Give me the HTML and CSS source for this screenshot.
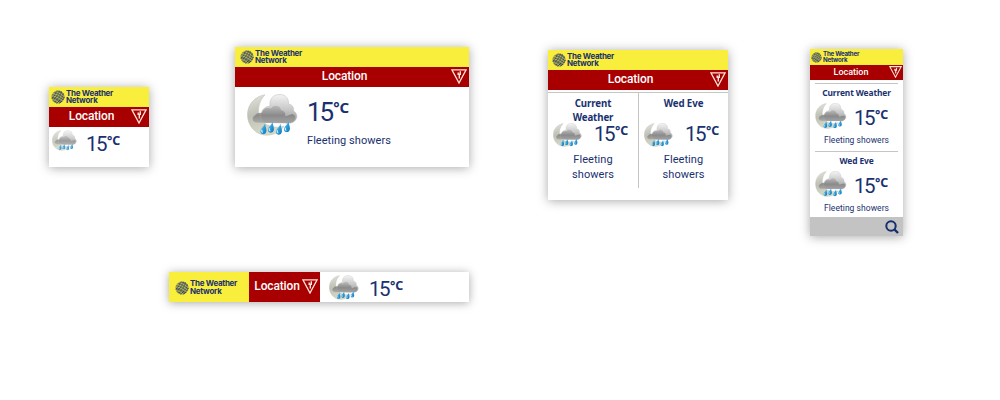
FILE: index.html
```html
<!DOCTYPE html>
<html lang="en">
<head>
<meta charset="utf-8">
<title>Weather widgets</title>
<link rel="stylesheet" href="styles.css">
</head>
<body>
<svg class="sprites" width="0" height="0" aria-hidden="true">
  <defs>
    <linearGradient id="cloudFill" x1="0" y1="0" x2="0" y2="1"><stop offset="0" stop-color="#f4f4f4"/><stop offset=".5" stop-color="#c9c9c9"/><stop offset="1" stop-color="#969696"/></linearGradient>
    <linearGradient id="darkFill" x1="0" y1="0" x2="0" y2="1"><stop offset="0" stop-color="#b5b5b5"/><stop offset=".55" stop-color="#838383"/><stop offset="1" stop-color="#a5a5a5"/></linearGradient>
    <linearGradient id="moonFill" x1="0" y1="0" x2=".3" y2="1"><stop offset="0" stop-color="#e6e6e2"/><stop offset=".5" stop-color="#bec0b4"/><stop offset="1" stop-color="#d8dac8"/></linearGradient>
    <linearGradient id="dropFill" x1="0" y1="0" x2="1" y2="1"><stop offset="0" stop-color="#a8dcf5"/><stop offset=".5" stop-color="#2e9fdc"/><stop offset="1" stop-color="#1273b4"/></linearGradient>
    <symbol id="drop" viewBox="0 0 7 11"><path d="M5 .3C5.300 4 6.500 5 6.300 7.700C6 10 4.500 10.800 3 10.700C1 10.500 .2 8.800 .6 7.200C1.200 5 4 3.500 5 .3Z" fill="url(#dropFill)"/><path d="M2 6.500C1.500 7.700 2 8.600 2.800 9" stroke="#d9f2ff" stroke-width="1.100" fill="none"/></symbol>
    <symbol id="cloud" viewBox="0 0 51 42">
      <path d="M18 .7C7 2.500 .4 11 .5 21C.6 33 10 41.500 20 41.200C28 41 34 37 37 32C28 35 18 32 13.500 25C9.500 17 12 7 18 .7Z" fill="url(#moonFill)" stroke="#bfc0b4" stroke-width=".5"/>
      <path d="M16 27C12 22 14 13 23 12C22 4 27 .4 33 .5C39 .6 42 5 41.500 10C46 11 47 14 46.500 17C50 19 51 23 48.500 26C46 29.500 42 29.500 38 29L18 28.500Z" fill="url(#cloudFill)" stroke="#b9b9b9" stroke-width=".5"/>
      <path d="M9 28.500C5 27.500 4.500 23 8 21.500C9 19.500 12 18.500 15 19C16 14.500 20 13 24 14.500C26 10.500 33 11 34 16C38 17 39 20 38 22C42 22 43 20 46 20C50 22 48 28 43 28.700C32 29.500 20 29 9 28.500Z" fill="url(#darkFill)" opacity=".85"/>
      <use href="#drop" x="12.500" y="29" width="8" height="11.500"/>
      <use href="#drop" x="20" y="27.500" width="8" height="11.500"/>
      <use href="#drop" x="28" y="29.500" width="8" height="11.500"/>
      <use href="#drop" x="36" y="27" width="8" height="11.500"/>
    </symbol>
    <symbol id="globe" viewBox="0 0 14 14">
      <circle cx="7" cy="7" r="6.500" fill="#7d8255"/>
      <path d="M1 8.500Q5 4 6 .7M2 10.500Q7 6 8.500 .8M3.500 12.200Q9 8 10.500 1.500M5.500 13.200Q11 9.500 12.300 3.500M8.500 13.200Q12 11 13.300 7" fill="none" stroke="#263b6b" stroke-width=".9"/>
      <path d="M.8 6Q4 5.500 12 11M2 3.500Q7 4 12.800 9M4.500 1.500Q10 3.500 13 6.500M1.500 9.500Q5 9.500 8 13" fill="none" stroke="#e5dc49" stroke-width=".6"/>
    </symbol>
    <symbol id="alert" viewBox="0 0 16 15">
      <path d="M.9 .8H15.100L8 14Z" fill="none" stroke="#ffe5d8" stroke-width="1.300"/>
      <path d="M9.300 2.200V5.200H7.200V3.500M8.300 5V9.500" fill="none" stroke="#ffe9df" stroke-width="1.400"/>
    </symbol>
  </defs>
</svg>
<main class="board">
  <div class="row">
    <section class="card compact">
      <header class="brand"><svg class="globe"><use href="#globe"/></svg><span class="brand-name">The Weather<br>Network</span></header>
      <div class="place"><span class="place-name">Location</span><svg class="alert"><use href="#alert"/></svg></div>
      <div class="reading"><svg class="cloud"><use href="#cloud"/></svg><div class="temp">15<span class="unit">°C</span></div></div>
    </section>
    <section class="card wide">
      <header class="brand"><svg class="globe"><use href="#globe"/></svg><span class="brand-name">The Weather<br>Network</span></header>
      <div class="place"><span class="place-name">Location</span><svg class="alert"><use href="#alert"/></svg></div>
      <div class="reading"><svg class="cloud"><use href="#cloud"/></svg><div><div class="temp">15<span class="unit">°C</span></div><p class="summary">Fleeting showers</p></div></div>
    </section>
    <section class="card double">
      <header class="brand"><svg class="globe"><use href="#globe"/></svg><span class="brand-name">The Weather<br>Network</span></header>
      <div class="place"><span class="place-name">Location</span><svg class="alert"><use href="#alert"/></svg></div>
      <div class="columns">
        <div class="period"><h2 class="period-name">Current<br>Weather</h2><div class="reading"><svg class="cloud"><use href="#cloud"/></svg><div class="temp">15<span class="unit">°C</span></div></div><p class="summary">Fleeting<br>showers</p></div>
        <div class="period"><h2 class="period-name">Wed Eve</h2><div class="reading"><svg class="cloud"><use href="#cloud"/></svg><div class="temp">15<span class="unit">°C</span></div></div><p class="summary">Fleeting<br>showers</p></div>
      </div>
    </section>
    <section class="card tall">
      <header class="brand"><svg class="globe"><use href="#globe"/></svg><span class="brand-name">The Weather<br>Network</span></header>
      <div class="place"><span class="place-name">Location</span><svg class="alert"><use href="#alert"/></svg></div>
      <div class="stack">
        <div class="period"><h2 class="period-name">Current Weather</h2><div class="reading"><svg class="cloud"><use href="#cloud"/></svg><div class="temp">15<span class="unit">°C</span></div></div><p class="summary">Fleeting showers</p></div>
        <div class="period"><h2 class="period-name">Wed Eve</h2><div class="reading"><svg class="cloud"><use href="#cloud"/></svg><div class="temp">15<span class="unit">°C</span></div></div><p class="summary">Fleeting showers</p></div>
      </div>
      <footer class="search"><svg width="14" height="14" viewBox="0 0 14 14"><circle cx="6" cy="6" r="4.700" fill="none" stroke="#142f70" stroke-width="2"/><path d="M9.500 9.500L13 13" stroke="#142f70" stroke-width="2.400"/></svg></footer>
    </section>
  </div>
  <section class="card banner">
    <header class="brand"><svg class="globe"><use href="#globe"/></svg><span class="brand-name">The Weather<br>Network</span></header>
    <div class="place"><span class="place-name">Location</span><svg class="alert"><use href="#alert"/></svg></div>
    <div class="reading"><svg class="cloud"><use href="#cloud"/></svg><div class="temp">15<span class="unit">°C</span></div></div>
  </section>
</main>
</body>
</html>
```
FILE: styles.css
```css
* { box-sizing: border-box; }
body { margin: 0; background: #fff; color: #19316f; font-family: Roboto, "Noto Sans", sans-serif; }
.sprites { position: absolute; }
h2, p { margin: 0; }
svg { flex: none; display: block; }
.board { width: 1000px; height: 400px; overflow: hidden; }
.row { display: flex; align-items: flex-start; height: 272px; }
.card { flex: none; background: #fff; box-shadow: 0 1px 10px rgba(0, 0, 0, .34); }

.brand { flex: none; height: 20px; background: #faee3c; display: flex; align-items: center; padding-left: 2px; }
.globe { width: 14px; height: 14px; margin-right: 1px; }
.brand-name { font-family: Inter, "Noto Sans", sans-serif; font-size: 8px; line-height: 7.500px; font-weight: 700; letter-spacing: -.3px; white-space: nowrap; }
.place { flex: none; height: 20px; background: #a80000; color: #fff; display: flex; align-items: center; padding-right: 2px; }
.place-name { flex: 1; text-align: center; font-size: 12px; line-height: 18px; font-weight: 500; padding-bottom: 2px; letter-spacing: -.15px; }
.alert { width: 16px; height: 15px; margin-bottom: 1px; }
.reading { display: flex; align-items: flex-start; }
.temp { display: flex; align-items: flex-start; font-size: 20.500px; line-height: 20px; letter-spacing: -1.500px; font-weight: 400; }
.unit { font-family: "Noto Sans", sans-serif; font-size: 12.500px; line-height: 14px; font-weight: 700; letter-spacing: 0; margin-left: 1px; }
.summary { font-size: 11px; line-height: 15px; letter-spacing: .05px; }
.period-name { font-family: "Noto Sans", sans-serif; font-size: 9.700px; line-height: 14px; font-weight: 700; text-align: center; letter-spacing: -.1px; }

.compact { width: 100px; height: 80px; margin: 87px 0 0 49px; }
.compact .place { padding-left: 3px; }
.compact .cloud { width: 25px; height: 21px; margin: 3px 9px 0 3px; opacity: .85; }
.compact .temp { margin-top: 7px; }

.wide { width: 234px; height: 120px; margin: 47px 0 0 86px; }
.wide .brand { padding-left: 5px; }
.wide .place { padding-left: 3px; }
.wide .cloud { width: 51px; height: 42px; margin: 7px 9px 0 12px; }
.wide .temp { margin-top: 12px; font-size: 26px; line-height: 26px; letter-spacing: -2px; }
.wide .unit { font-size: 15px; line-height: 17px; letter-spacing: 0; }
.wide .summary { margin-top: 8px; }

.double { width: 180px; height: 150px; margin: 50px 0 0 79px; }
.double .brand { padding-left: 4px; }
.double .place { padding-left: 3px; }
.columns { display: grid; grid-template-columns: 91px 89px; height: 96px; margin-top: 2px; border-top: 1px solid #c5c5c5; }
.columns .period:first-child { border-right: 1px solid #c5c5c5; }
.columns .period-name { height: 28px; margin-top: 4px; }
.columns .reading { height: 27px; }
.columns .cloud { width: 29px; height: 24px; margin: -2px 12px 0 5px; }
.columns .temp { margin-top: -1px; }
.columns .summary { text-align: center; }

.tall { width: 93px; height: 187px; margin: 49px 0 0 82px; display: flex; flex-direction: column; }
.tall .brand { height: 16px; padding-left: 1px; }
.tall .globe { width: 11px; height: 11px; }
.tall .brand-name { font-size: 6.200px; line-height: 5.700px; letter-spacing: -.25px; }
.tall .place { height: 15px; padding: 0 1px 0 3px; }
.tall .place-name { font-size: 9px; line-height: 13px; padding-bottom: 1px; letter-spacing: 0; }
.tall .alert { width: 13px; height: 12px; }
.stack { padding-top: 3px; height: 137px; flex: none; }
.stack .period { height: 68px; margin: 0 5px; border-top: 1px solid #c5c5c5; }
.stack .period-name { font-size: 8.400px; line-height: 18px; height: 19px; white-space: nowrap; }
.stack .reading { height: 29px; }
.stack .cloud { width: 32px; height: 26px; margin-right: 7px; }
.stack .temp { margin-top: 5px; }
.stack .summary { font-size: 8.500px; text-align: center; white-space: nowrap; margin-top: 1px; }
.search { flex: none; height: 19px; background: #c3c3c3; display: flex; align-items: center; justify-content: flex-end; padding: 1px 4px 0 0; }

.banner { width: 300px; height: 30px; margin-left: 169px; display: flex; }
.banner .brand { width: 80px; height: 30px; padding: 1px 0 0 6px; }
.banner .place { width: 71px; height: 30px; }
.banner .place-name { padding-left: 3px; }
.banner .cloud { width: 30px; height: 25px; margin: 3px 10px 0 9px; }
.banner .temp { margin-top: 7px; }
```
